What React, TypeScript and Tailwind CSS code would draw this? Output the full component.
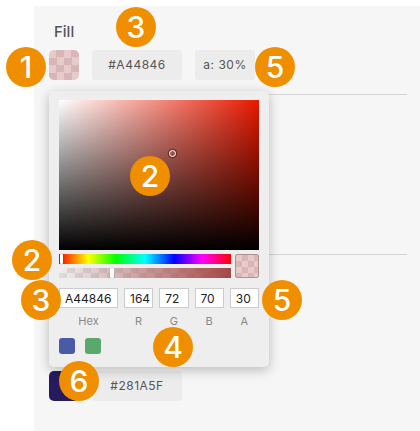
import React from "react";

const checker =
  "bg-[repeating-conic-gradient(#d9b6b6_0_25%,#e7caca_0_50%)] bg-[length:15px_15px]";

function Badge({ n, className }: { n: number; className: string }) {
  return (
    <div
      className={`absolute w-10 h-10 rounded-full bg-[#ef8f00] text-white flex items-center justify-center text-[30px] font-medium leading-none ${className}`}
    >
      {n}
    </div>
  );
}

function Swatch({ color }: { color: string }) {
  return (
    <div
      className="w-[30px] h-[30px] rounded-[5px]"
      style={{ backgroundColor: color }}
    />
  );
}

function ValueBox({ text, w }: { text: string; w: string }) {
  return (
    <div
      className={`${w} h-[30px] rounded-[3px] bg-[#ececec] flex items-center justify-center text-[12px] tracking-[0.5px] text-[#555]`}
    >
      {text}
    </div>
  );
}

function Picker() {
  const fields = [
    { v: "164", l: "R" },
    { v: "72", l: "G" },
    { v: "70", l: "B" },
    { v: "30", l: "A" },
  ];
  return (
    <div className="absolute left-[49px] top-[91px] w-[220px] h-[276px] bg-[#eeeeee] rounded-[5px] shadow-[0_3px_12px_rgba(0,0,0,0.25)] pt-[9px] px-[10px]">
      {/* saturation / value */}
      <div className="relative w-[200px] h-[150px] bg-[linear-gradient(to_top,#000,transparent),linear-gradient(to_right,#fff,rgba(255,255,255,0)),linear-gradient(#e81800,#e81800)]">
        <div className="absolute left-[110px] top-[50px] w-[7px] h-[7px] rounded-full border-[1.5px] border-white shadow-[0_0_1px_1px_rgba(0,0,0,0.5)]" />
      </div>
      <div className="flex gap-[4px] mt-[4px]">
        <div className="flex flex-col gap-[4px] w-[172px]">
          <div className="relative h-[10px] bg-[linear-gradient(to_right,#f00_0%,#ff0_17%,#0f0_33%,#0ff_50%,#00f_67%,#f0f_83%,#f00_100%)]">
            <div className="absolute left-[1px] top-0 w-[3px] h-[10px] bg-white rounded-[1px] shadow-[0_0_1px_rgba(0,0,0,0.6)]" />
          </div>
          <div className="relative h-[10px] bg-[repeating-conic-gradient(#dcdcdc_0_25%,#efefef_0_50%)] bg-[length:16px_10px]">
            <div className="absolute inset-0 bg-[linear-gradient(to_right,rgba(164,72,70,0),rgba(164,72,70,1))]" />
            <div className="absolute left-[51px] top-0 w-[4px] h-[10px] bg-white rounded-[1px] shadow-[0_0_1px_rgba(0,0,0,0.5)]" />
          </div>
        </div>
        <div className="w-6 h-6 rounded-[2px] border border-[#b09090] bg-[repeating-conic-gradient(#d9b6b6_0_25%,#e7caca_0_50%)] bg-[length:12px_12px]" />
      </div>
      <div className="flex gap-[6px] mt-[10px]">
        <div className="w-[59px] flex flex-col items-center">
          <input
            readOnly
            value="A44846"
            className="w-full h-5 bg-white border border-[#cccccc] pl-[5px] text-[12px] text-[#222] outline-none"
          />
          <span className="mt-[5px] text-[11px] text-[#8a8a8a]">Hex</span>
        </div>
        {fields.map((f) => (
          <div key={f.l} className="flex-1 flex flex-col items-center">
            <input
              readOnly
              value={f.v}
              className="w-full h-5 bg-white border border-[#cccccc] pl-[5px] text-[12px] text-[#222] outline-none"
            />
            <span className="mt-[5px] text-[11px] text-[#8a8a8a]">{f.l}</span>
          </div>
        ))}
      </div>
      <div className="flex gap-[10px] mt-[8px]">
        <div className="w-4 h-4 rounded-[3px] bg-[#4a5ba6]" />
        <div className="w-4 h-4 rounded-[3px] bg-[#5aa86b]" />
      </div>
    </div>
  );
}

export default function App() {
  return (
    <div className="relative w-[420px] h-[431px] bg-white overflow-hidden font-['Inter',sans-serif]">
      <div className="ml-[34px] mt-[6px] h-[425px] bg-[#f6f6f6] pl-[15px] pr-[13px] pt-[15px]">
        <div className="h-5 text-[15px] font-medium text-[#555] pl-[5px]">Fill</div>
        <div className="flex items-center gap-[13px] mt-[9px]">
          <div className={`w-[30px] h-[30px] rounded-[5px] ${checker}`} />
          <ValueBox text="#A44846" w="w-[90px]" />
          <ValueBox text="a: 30%" w="w-[60px]" />
        </div>
        <div className="mt-[14px] border-t border-[#d6d6d6]" />
        <div className="h-[160px] border-b border-[#d6d6d6]" />
        <div className="flex items-center gap-[13px] mt-[116px]">
          <Swatch color="#281A5F" />
          <ValueBox text="#281A5F" w="w-[90px]" />
        </div>
      </div>

      <Picker />

      <Badge n={1} className="left-[6px] top-[47px]" />
      <Badge n={3} className="left-[116px] top-[7px]" />
      <Badge n={5} className="left-[255px] top-[47px]" />
      <Badge n={2} className="left-[130px] top-[156px]" />
      <Badge n={2} className="left-[12px] top-[240px]" />
      <Badge n={3} className="left-[21px] top-[280px]" />
      <Badge n={5} className="left-[262px] top-[280px]" />
      <Badge n={4} className="left-[153px] top-[327px]" />
      <Badge n={6} className="left-[59px] top-[361px]" />
    </div>
  );
}
